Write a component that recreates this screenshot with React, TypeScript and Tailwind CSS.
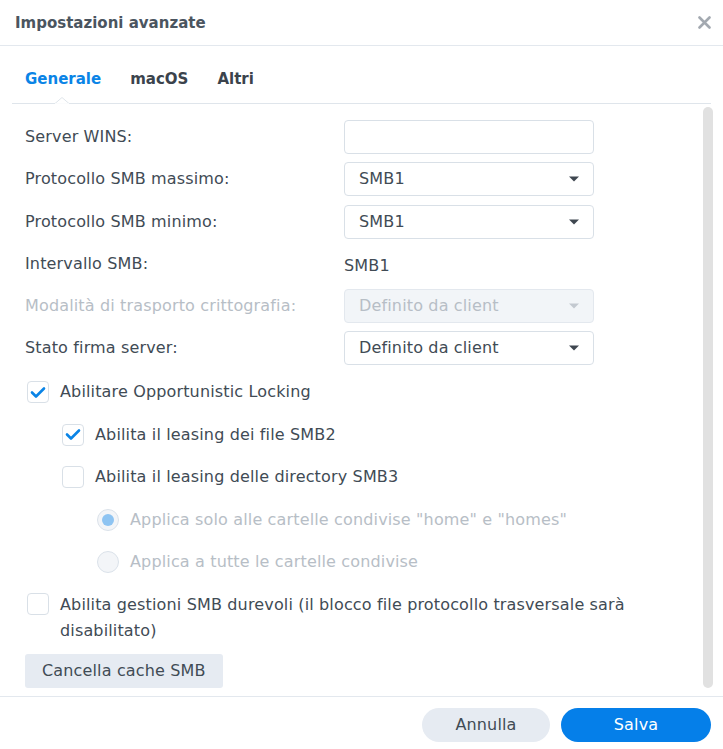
import React from "react"

const body = "font-['DejaVu_Sans',Verdana,sans-serif]"

function Caret({ muted = false }: { muted?: boolean }) {
  return (
    <svg width="10" height="6" viewBox="0 0 10 6" className="absolute right-[14px] top-1/2 -translate-y-1/2">
      <path d="M0 0.5 L10 0.5 L5 5.5 Z" fill={muted ? "#c3c9d0" : "#3f4750"} />
    </svg>
  )
}

function Field({ label, children, disabled = false }: { label: string; children: React.ReactNode; disabled?: boolean }) {
  return (
    <div className="flex h-[34px] items-center">
      <div className={`w-[319px] shrink-0 ${disabled ? "text-[#b7bec6]" : "text-[#414b55]"}`}>{label}</div>
      {children}
    </div>
  )
}

function Select({ value, disabled = false }: { value: string; disabled?: boolean }) {
  return (
    <div
      className={`relative flex h-[34px] w-[250px] items-center rounded-[4px] border pl-[14px] ${
        disabled ? "border-[#e3e8ee] bg-[#f2f5f8] text-[#b7bec6]" : "border-[#d9e0e7] bg-white text-[#414b55]"
      }`}
    >
      {value}
      <Caret muted={disabled} />
    </div>
  )
}

function Check({ checked }: { checked: boolean }) {
  return (
    <div className="flex h-[22px] w-[22px] shrink-0 items-center justify-center rounded-[4px] border border-[#d9e0e7] bg-white">
      {checked && (
        <svg width="16" height="13" viewBox="0 0 16 13">
          <path d="M2 6.5 L6 10.5 L14 2.5" fill="none" stroke="#0a84e6" strokeWidth="2.6" strokeLinecap="round" strokeLinejoin="round" />
        </svg>
      )}
    </div>
  )
}

function Radio({ checked }: { checked: boolean }) {
  return (
    <div className="flex h-[22px] w-[22px] shrink-0 items-center justify-center rounded-full border border-[#dbe2ea] bg-[#f3f5f8]">
      {checked && <div className="h-[12px] w-[12px] rounded-full bg-[#8ec4f2]" />}
    </div>
  )
}

export default function App() {
  return (
    <div className={`flex h-[749px] w-[723px] flex-col bg-white text-[16px] leading-[24px] tracking-[0.15px] ${body}`}>
      <div className="flex h-[46px] shrink-0 items-center justify-between border-b border-[#e3e8ee] pl-[15px] pr-[12px]">
        <div className="text-[15px] font-bold tracking-normal text-[#4b555f]">Impostazioni avanzate</div>
        <svg width="13" height="13" viewBox="0 0 13 13">
          <path d="M1.5 1.5 L11.5 11.5 M11.5 1.5 L1.5 11.5" stroke="#a3a9b0" strokeWidth="2.6" strokeLinecap="round" />
        </svg>
      </div>

      <div className="flex min-h-0 flex-1 flex-col">
        <div className="relative mx-[12px] flex gap-[29px] border-b border-[#dfe5eb] pb-[14px] pl-[13px] pt-[23px] text-[15px] font-bold leading-[20px] tracking-normal">
          <span className="text-[#0a84e6]">Generale</span>
          <span className="text-[#3b434c]">macOS</span>
          <span className="text-[#3b434c]">Altri</span>
          <svg width="14" height="7" viewBox="0 0 14 7" className="absolute bottom-[-1px] left-[43px]">
            <path d="M0 6.5 L7 0.5 L14 6.5" fill="white" stroke="#dfe5eb" strokeWidth="1" />
            <path d="M0 7 L14 7" stroke="white" strokeWidth="1.5" />
          </svg>
        </div>

        <div className="flex min-h-0 flex-1">
          <div className="flex flex-1 flex-col pl-[25px] pt-[16px]">
            <div className="flex flex-col gap-[8.3px]">
              <Field label="Server WINS:">
                <div className="h-[34px] w-[250px] rounded-[4px] border border-[#d9e0e7] bg-white" />
              </Field>
              <Field label="Protocollo SMB massimo:">
                <Select value="SMB1" />
              </Field>
              <Field label="Protocollo SMB minimo:">
                <Select value="SMB1" />
              </Field>
              <Field label="Intervallo SMB:">
                <div className="pt-[4px] text-[#414b55]">SMB1</div>
              </Field>
              <Field label="Modalità di trasporto crittografia:" disabled>
                <Select value="Definito da client" disabled />
              </Field>
              <Field label="Stato firma server:">
                <Select value="Definito da client" />
              </Field>
            </div>

            <div className="mt-[10px] flex flex-col gap-[8.5px] pl-[2px]">
              <div className="flex h-[34px] items-center gap-[11px] text-[#414b55]">
                <Check checked />
                <span>Abilitare Opportunistic Locking</span>
              </div>
              <div className="flex h-[34px] items-center gap-[11px] pl-[35px] text-[#414b55]">
                <Check checked />
                <span>Abilita il leasing dei file SMB2</span>
              </div>
              <div className="flex h-[34px] items-center gap-[11px] pl-[35px] text-[#414b55]">
                <Check checked={false} />
                <span>Abilita il leasing delle directory SMB3</span>
              </div>
              <div className="flex h-[34px] items-center gap-[11px] pl-[70px] text-[#b7bec6]">
                <Radio checked />
                <span>Applica solo alle cartelle condivise "home" e "homes"</span>
              </div>
              <div className="flex h-[34px] items-center gap-[11px] pl-[70px] text-[#b7bec6]">
                <Radio checked={false} />
                <span>Applica a tutte le cartelle condivise</span>
              </div>
            </div>

            <div className="mt-[13px] flex items-start gap-[11px] pl-[2px] text-[#414b55]">
              <div className="pt-[1px]">
                <Check checked={false} />
              </div>
              <span className="w-[590px] leading-[26px]">
                Abilita gestioni SMB durevoli (il blocco file protocollo trasversale sarà disabilitato)
              </span>
            </div>

            <div className="mt-[10px]">
              <button className="h-[34px] rounded-[3px] bg-[#e6ebf2] px-[17px] text-[#414b55]">Cancella cache SMB</button>
            </div>
          </div>
          <div className="mb-[8px] mr-[10px] mt-[3px] w-[10px] rounded-full bg-[#e1e1e1]" />
        </div>
      </div>

      <div className="flex h-[53px] shrink-0 items-start justify-end gap-[11px] border-t border-[#e3e8ee] pr-[12px] pt-[11px]">
        <button className="h-[34px] w-[128px] rounded-full bg-[#e6ebf2] text-[#414b55]">Annulla</button>
        <button className="h-[34px] w-[150px] rounded-full bg-[#057fe9] text-white">Salva</button>
      </div>
    </div>
  )
}
